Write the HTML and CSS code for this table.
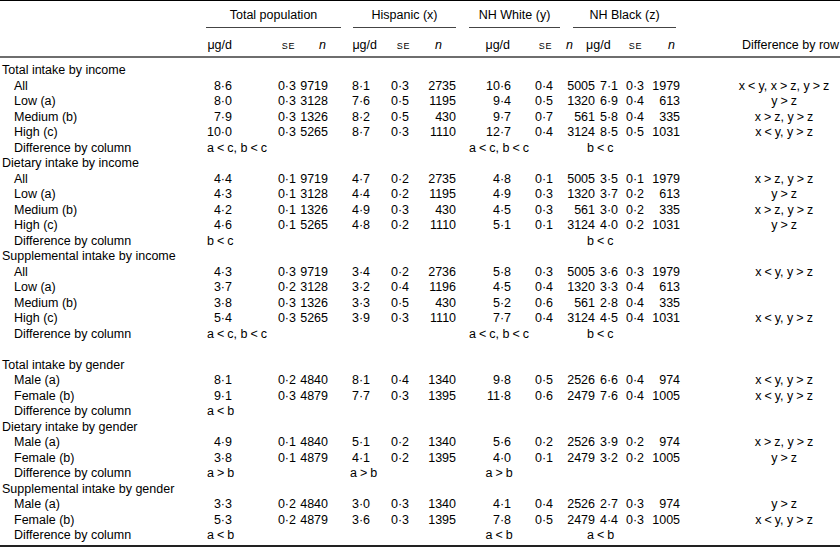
FILE: index.html
```html
<!DOCTYPE html>
<html lang="en">
<head>
<meta charset="utf-8">
<title>Intake table</title>
<link rel="stylesheet" href="styles.css">
</head>
<body>
<table class="t">
<colgroup>
<col class="c-lab"><col class="c-tm"><col class="c-ts"><col class="c-tn"><col class="c-hm"><col class="c-hs"><col class="c-hn"><col class="c-wm"><col class="c-ws"><col class="c-wn"><col class="c-bm"><col class="c-bs"><col class="c-bn"><col class="c-diff">
</colgroup>
<thead>
<tr class="h1"><th></th><th colspan="3"><div class="grp g-t">Total population</div></th><th colspan="3"><div class="grp g-h">Hispanic (x)</div></th><th colspan="2"><div class="grp g-w">NH White (y)</div></th><th colspan="4"><div class="grp g-b">NH Black (z)</div></th><th></th></tr>
<tr class="h2"><th></th><th>μg/d</th><th><span class="se">SE</span></th><th><i>n</i></th><th>μg/d</th><th><span class="se">SE</span></th><th><i>n</i></th><th>μg/d</th><th><span class="se">SE</span></th><th><i>n</i></th><th>μg/d</th><th><span class="se">SE</span></th><th><i>n</i></th><th>Difference by row</th></tr>
</thead>
<tbody>
<tr class="sec first"><td colspan="14">Total intake by income</td></tr>
<tr class="d"><td>All</td><td>8·6</td><td>0·3</td><td>9719</td><td>8·1</td><td>0·3</td><td>2735</td><td>10·6</td><td>0·4</td><td>5005</td><td>7·1</td><td>0·3</td><td>1979</td><td>x<span class="r">&lt;</span>y, x<span class="r">&gt;</span>z, y<span class="r">&gt;</span>z</td></tr>
<tr class="d"><td>Low (a)</td><td>8·0</td><td>0·3</td><td>3128</td><td>7·6</td><td>0·5</td><td>1195</td><td>9·4</td><td>0·5</td><td>1320</td><td>6·9</td><td>0·4</td><td>613</td><td>y<span class="r">&gt;</span>z</td></tr>
<tr class="d"><td>Medium (b)</td><td>7·9</td><td>0·3</td><td>1326</td><td>8·2</td><td>0·5</td><td>430</td><td>9·7</td><td>0·7</td><td>561</td><td>5·8</td><td>0·4</td><td>335</td><td>x<span class="r">&gt;</span>z, y<span class="r">&gt;</span>z</td></tr>
<tr class="d"><td>High (c)</td><td>10·0</td><td>0·3</td><td>5265</td><td>8·7</td><td>0·3</td><td>1110</td><td>12·7</td><td>0·4</td><td>3124</td><td>8·5</td><td>0·5</td><td>1031</td><td>x<span class="r">&lt;</span>y, y<span class="r">&gt;</span>z</td></tr>
<tr class="dc"><td class="lab">Difference by column</td><td class="dt" colspan="3">a<span class="r">&lt;</span>c, b<span class="r">&lt;</span>c</td><td class="dh" colspan="3"></td><td class="dw" colspan="2">a<span class="r">&lt;</span>c, b<span class="r">&lt;</span>c</td><td class="db" colspan="4">b<span class="r">&lt;</span>c</td><td></td></tr>
<tr class="sec"><td colspan="14">Dietary intake by income</td></tr>
<tr class="d"><td>All</td><td>4·4</td><td>0·1</td><td>9719</td><td>4·7</td><td>0·2</td><td>2735</td><td>4·8</td><td>0·1</td><td>5005</td><td>3·5</td><td>0·1</td><td>1979</td><td>x<span class="r">&gt;</span>z, y<span class="r">&gt;</span>z</td></tr>
<tr class="d"><td>Low (a)</td><td>4·3</td><td>0·1</td><td>3128</td><td>4·4</td><td>0·2</td><td>1195</td><td>4·9</td><td>0·3</td><td>1320</td><td>3·7</td><td>0·2</td><td>613</td><td>y<span class="r">&gt;</span>z</td></tr>
<tr class="d"><td>Medium (b)</td><td>4·2</td><td>0·1</td><td>1326</td><td>4·9</td><td>0·3</td><td>430</td><td>4·5</td><td>0·3</td><td>561</td><td>3·0</td><td>0·2</td><td>335</td><td>x<span class="r">&gt;</span>z, y<span class="r">&gt;</span>z</td></tr>
<tr class="d"><td>High (c)</td><td>4·6</td><td>0·1</td><td>5265</td><td>4·8</td><td>0·2</td><td>1110</td><td>5·1</td><td>0·1</td><td>3124</td><td>4·0</td><td>0·2</td><td>1031</td><td>y<span class="r">&gt;</span>z</td></tr>
<tr class="dc"><td class="lab">Difference by column</td><td class="dt" colspan="3">b<span class="r">&lt;</span>c</td><td class="dh" colspan="3"></td><td class="dw" colspan="2"></td><td class="db" colspan="4">b<span class="r">&lt;</span>c</td><td></td></tr>
<tr class="sec"><td colspan="14">Supplemental intake by income</td></tr>
<tr class="d"><td>All</td><td>4·3</td><td>0·3</td><td>9719</td><td>3·4</td><td>0·2</td><td>2736</td><td>5·8</td><td>0·3</td><td>5005</td><td>3·6</td><td>0·3</td><td>1979</td><td>x<span class="r">&lt;</span>y, y<span class="r">&gt;</span>z</td></tr>
<tr class="d"><td>Low (a)</td><td>3·7</td><td>0·2</td><td>3128</td><td>3·2</td><td>0·4</td><td>1196</td><td>4·5</td><td>0·4</td><td>1320</td><td>3·3</td><td>0·4</td><td>613</td><td></td></tr>
<tr class="d"><td>Medium (b)</td><td>3·8</td><td>0·3</td><td>1326</td><td>3·3</td><td>0·5</td><td>430</td><td>5·2</td><td>0·6</td><td>561</td><td>2·8</td><td>0·4</td><td>335</td><td></td></tr>
<tr class="d"><td>High (c)</td><td>5·4</td><td>0·3</td><td>5265</td><td>3·9</td><td>0·3</td><td>1110</td><td>7·7</td><td>0·4</td><td>3124</td><td>4·5</td><td>0·4</td><td>1031</td><td>x<span class="r">&lt;</span>y, y<span class="r">&gt;</span>z</td></tr>
<tr class="dc"><td class="lab">Difference by column</td><td class="dt" colspan="3">a<span class="r">&lt;</span>c, b<span class="r">&lt;</span>c</td><td class="dh" colspan="3"></td><td class="dw" colspan="2">a<span class="r">&lt;</span>c, b<span class="r">&lt;</span>c</td><td class="db" colspan="4">b<span class="r">&lt;</span>c</td><td></td></tr>
<tr class="blank"><td colspan="14"></td></tr>
<tr class="sec"><td colspan="14">Total intake by gender</td></tr>
<tr class="d"><td>Male (a)</td><td>8·1</td><td>0·2</td><td>4840</td><td>8·1</td><td>0·4</td><td>1340</td><td>9·8</td><td>0·5</td><td>2526</td><td>6·6</td><td>0·4</td><td>974</td><td>x<span class="r">&lt;</span>y, y<span class="r">&gt;</span>z</td></tr>
<tr class="d"><td>Female (b)</td><td>9·1</td><td>0·3</td><td>4879</td><td>7·7</td><td>0·3</td><td>1395</td><td>11·8</td><td>0·6</td><td>2479</td><td>7·6</td><td>0·4</td><td>1005</td><td>x<span class="r">&lt;</span>y, y<span class="r">&gt;</span>z</td></tr>
<tr class="dc"><td class="lab">Difference by column</td><td class="dt" colspan="3">a<span class="r">&lt;</span>b</td><td class="dh" colspan="3"></td><td class="dw" colspan="2"></td><td class="db" colspan="4"></td><td></td></tr>
<tr class="sec"><td colspan="14">Dietary intake by gender</td></tr>
<tr class="d"><td>Male (a)</td><td>4·9</td><td>0·1</td><td>4840</td><td>5·1</td><td>0·2</td><td>1340</td><td>5·6</td><td>0·2</td><td>2526</td><td>3·9</td><td>0·2</td><td>974</td><td>x<span class="r">&gt;</span>z, y<span class="r">&gt;</span>z</td></tr>
<tr class="d"><td>Female (b)</td><td>3·8</td><td>0·1</td><td>4879</td><td>4·1</td><td>0·2</td><td>1395</td><td>4·0</td><td>0·1</td><td>2479</td><td>3·2</td><td>0·2</td><td>1005</td><td>y<span class="r">&gt;</span>z</td></tr>
<tr class="dc"><td class="lab">Difference by column</td><td class="dt" colspan="3">a<span class="r">&gt;</span>b</td><td class="dh" colspan="3">a<span class="r">&gt;</span>b</td><td class="dw" colspan="2">a<span class="r">&gt;</span>b</td><td class="db" colspan="4"></td><td></td></tr>
<tr class="sec"><td colspan="14">Supplemental intake by gender</td></tr>
<tr class="d"><td>Male (a)</td><td>3·3</td><td>0·2</td><td>4840</td><td>3·0</td><td>0·3</td><td>1340</td><td>4·1</td><td>0·4</td><td>2526</td><td>2·7</td><td>0·3</td><td>974</td><td>y<span class="r">&gt;</span>z</td></tr>
<tr class="d"><td>Female (b)</td><td>5·3</td><td>0·2</td><td>4879</td><td>3·6</td><td>0·3</td><td>1395</td><td>7·8</td><td>0·5</td><td>2479</td><td>4·4</td><td>0·3</td><td>1005</td><td>x<span class="r">&lt;</span>y, y<span class="r">&gt;</span>z</td></tr>
<tr class="dc last"><td class="lab">Difference by column</td><td class="dt" colspan="3">a<span class="r">&lt;</span>b</td><td class="dh" colspan="3"></td><td class="dw" colspan="2">a<span class="r">&lt;</span>b</td><td class="db" colspan="4">a<span class="r">&lt;</span>b</td><td></td></tr>
</tbody>
</table>
</body>
</html>
```
FILE: styles.css
```css
html, body { margin: 0; padding: 0; background: #fff; }

.t {
  width: 840px;
  table-layout: fixed;
  border-collapse: collapse;
  font-family: "Liberation Sans", Arial, sans-serif;
  font-size: 12.5px;
  line-height: 15.5px;
  color: #000;
  border-top: 1px solid #000;
  border-bottom: 2px solid #222;
}

.c-lab { width: 205px; }
.c-tm { width: 33px; }
.c-ts { width: 61px; }
.c-tn { width: 41px; }
.c-hm { width: 40px; }
.c-hs { width: 32px; }
.c-hn { width: 50px; }
.c-wm { width: 54px; }
.c-ws { width: 42px; }
.c-wn { width: 39px; }
.c-bm { width: 24px; }
.c-bs { width: 27px; }
.c-bn { width: 36px; }
.c-diff { width: 156px; }

.t th, .t td {
  padding: 0;
  white-space: nowrap;
  font-weight: normal;
  vertical-align: top;
}

/* header row 1 */
.h1 th { padding: 6px 0 0; line-height: 16px; text-align: center; }
.grp { border-bottom: 1px solid #444; padding-bottom: 4px; }
.g-t { margin: 0 -1px 0 1px; }
.g-h { margin: 0 6px 0 13px; }
.g-w { margin: 0 -2px 0 7px; }
.g-b { margin: 0 8px 0 15px; }

/* header row 2 */
.h2 th { padding-top: 9px; padding-bottom: 2px; line-height: 16px; text-align: right; border-bottom: 2px solid #6e6e6e; }
.h2 th:nth-child(2) { padding-right: 6px; }
.h2 th:nth-child(3) { padding-right: 4px; }
.h2 th:nth-child(4) { padding-right: 14px; }
.h2 th:nth-child(5) { padding-right: 3px; }
.h2 th:nth-child(6) { padding-right: 2px; }
.h2 th:nth-child(7) { padding-right: 20px; }
.h2 th:nth-child(8) { padding-right: 6px; }
.h2 th:nth-child(9) { padding-right: 6px; }
.h2 th:nth-child(10) { padding-right: 24px; }
.h2 th:nth-child(11) { text-align: left; text-indent: -11px; }
.h2 th:nth-child(12) { padding-right: 6px; }
.h2 th:nth-child(13) { padding-right: 9px; }
.h2 th:nth-child(14) { padding-right: 1px; }

.se { font-size: 9px; letter-spacing: 0.6px; }
.t i { font-style: italic; }
.r { padding: 0 3px; }

/* body rows */
.sec td { padding-left: 2px; }
.first td { padding-top: 5px; }
.last td { padding-bottom: 1.5px; }
.blank td { height: 15.5px; }

.d td { text-align: right; }
.d td:nth-child(1) { text-align: left; padding-left: 14px; }
.d td:nth-child(2) { padding-right: 6px; }
.d td:nth-child(3) { padding-right: 3px; }
.d td:nth-child(4) { padding-right: 12px; }
.d td:nth-child(5) { padding-right: 10px; }
.d td:nth-child(6) { padding-right: 3px; }
.d td:nth-child(7) { padding-right: 6px; }
.d td:nth-child(8) { padding-right: 5px; }
.d td:nth-child(9) { padding-right: 5px; }
.d td:nth-child(10) { padding-right: 2px; }
.d td:nth-child(11) { padding-right: 3px; }
.d td:nth-child(12) { padding-right: 4px; }
.d td:nth-child(13) { padding-right: 4px; }
.d td:nth-child(14) { text-align: center; padding-left: 44px; }

.dc .lab { padding-left: 14px; }
.dc .dt { padding-left: 2px; }
.dc .dh { padding-left: 10px; }
.dc .dw { text-align: center; padding-right: 22px; }
.dc .db { padding-left: 29px; }
```
